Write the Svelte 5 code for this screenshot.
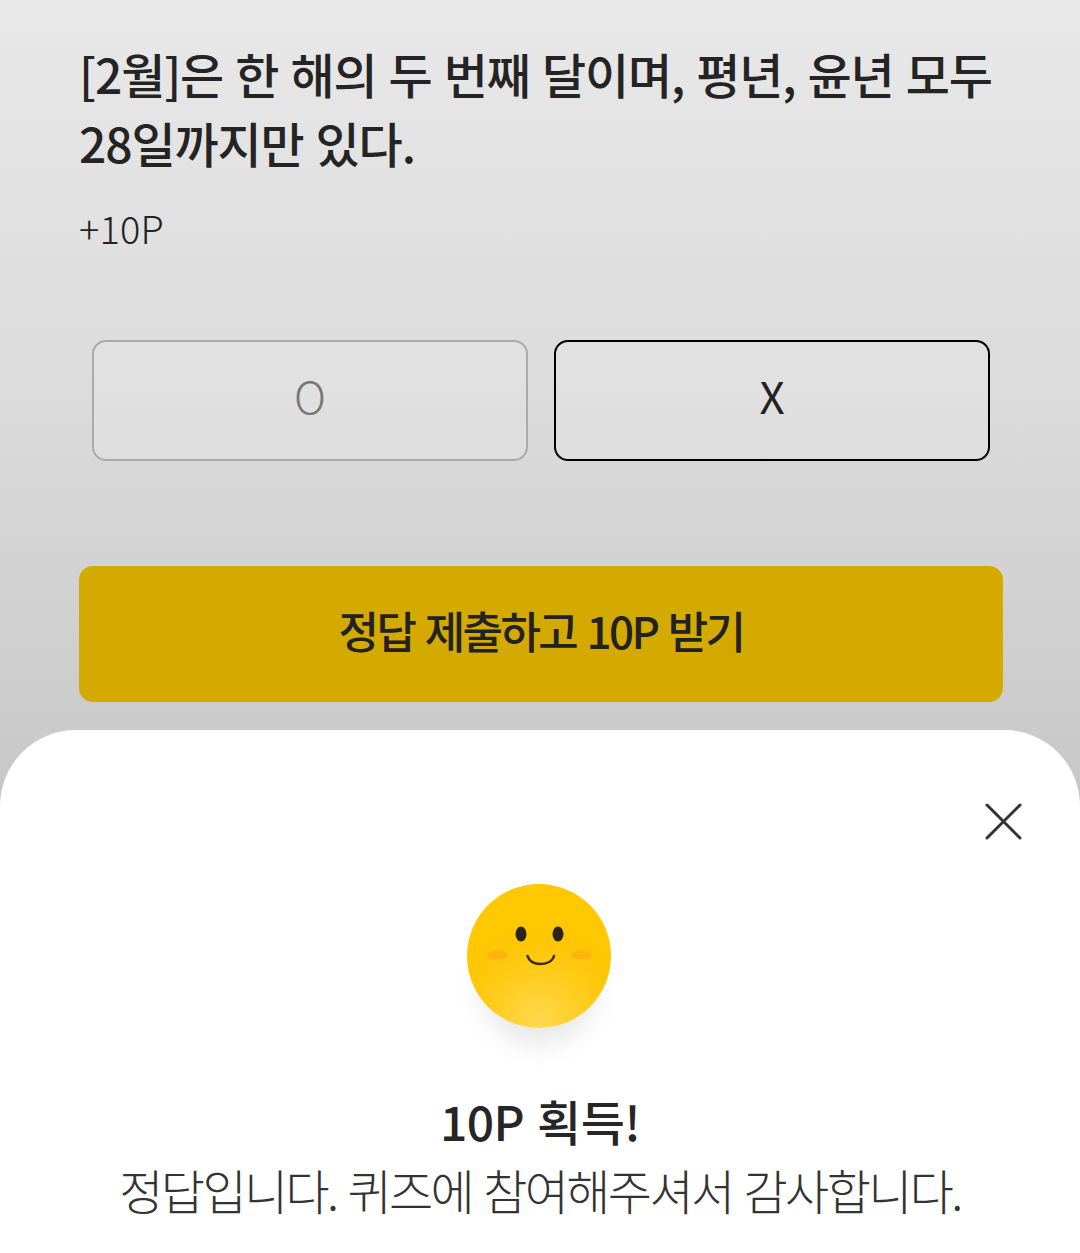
<script>
  let picked = 'X';
  const options = ['O', 'X'];
</script>

<div class="page">
  <section class="quiz">
    <h1>[2월]은 한 해의 두 번째 달이며, 평년, 윤년 모두 28일까지만 있다.</h1>
    <p class="point">+10P</p>
    <div class="options">
      {#each options as opt}
        <button class="opt" class:picked={picked === opt} on:click={() => (picked = opt)}>{opt}</button>
      {/each}
    </div>
    <button class="submit">정답 제출하고 10P 받기</button>
  </section>

  <section class="sheet">
    <button class="close" aria-label="닫기">
      <svg width="38" height="38" viewBox="0 0 38 38" fill="none" stroke="#333" stroke-width="3" stroke-linecap="round"><path d="M3 3l33 33M36 3L3 36"/></svg>
    </button>
    <div class="face">
      <svg width="144" height="144" viewBox="0 0 144 144">
        <defs>
          <radialGradient id="skin" cx="72" cy="138" r="100" gradientUnits="userSpaceOnUse">
            <stop offset="0" stop-color="#ffd84f"/>
            <stop offset="0.45" stop-color="#ffcd20"/>
            <stop offset="0.8" stop-color="#ffc606"/>
            <stop offset="1" stop-color="#ffc800"/>
          </radialGradient>
        </defs>
        <circle cx="72" cy="72" r="72" fill="url(#skin)"/>
        <ellipse cx="30.500" cy="71" rx="10.500" ry="4.500" fill="#ffb30f"/>
        <ellipse cx="114.500" cy="71" rx="10.500" ry="4.500" fill="#ffb30f"/>
        <ellipse cx="54" cy="50" rx="5.500" ry="7.500" fill="#2b2410"/>
        <ellipse cx="91" cy="50" rx="5.500" ry="7.500" fill="#2b2410"/>
        <path d="M60.500 72c2 6 8 8 13 8s12-2 13.500-8" fill="none" stroke="#3a2f10" stroke-width="2.500" stroke-linecap="round"/>
      </svg>
    </div>
    <h2>10P 획득!</h2>
    <p class="msg">정답입니다. 퀴즈에 참여해주셔서 감사합니다.</p>
  </section>
</div>

<style>
  :global(body) { margin: 0; }
  .page {
    width: 1080px; height: 1253px; overflow: hidden;
    display: flex; flex-direction: column;
    background: linear-gradient(#e8e8e8, #dbdbdb 400px, #cbcbcb 730px, #c6c6c6 800px);
    font-family: "Noto Sans CJK KR", "Noto Sans", sans-serif;
    color: #222;
  }
  .quiz { height: 730px; box-sizing: border-box; padding: 39px 77px 0 79px; flex: none; }
  h1 { margin: 0; font-size: 48px; line-height: 69px; font-weight: 500; letter-spacing: -1.15px; word-spacing: 2.5px; color: #242424; }
  .point { margin: 26px 0 0; font-size: 38px; line-height: 50px; font-weight: 300; color: #222; letter-spacing: 0.2px; }
  .options { display: flex; gap: 26px; margin: 87px 13px 0; }
  .opt {
    flex: 1; height: 121px; box-sizing: border-box; padding: 0 0 11px;
    background: rgba(255,255,255,0.14); border: 2px solid #aaa; border-radius: 14px;
    font: 300 44px "Noto Sans CJK KR", sans-serif; color: #777;
  }
  .opt.picked { border-color: #000; color: #222; font-weight: 400; }
  .submit {
    display: block; width: 924px; height: 136px; margin-top: 105px; padding: 0 0 8px;
    background: #d4aa00; border: 0; border-radius: 14px;
    font: 500 44px "Noto Sans CJK KR", sans-serif; letter-spacing: -2.6px; word-spacing: 3px; color: #222;
  }
  .sheet {
    position: relative; flex: 1;
    background: #fff; border-radius: 76px 76px 0 0;
    display: flex; flex-direction: column; align-items: center;
    padding-top: 154px;
  }
  .close { position: absolute; top: 72px; right: 58px; width: 38px; height: 38px; padding: 0; border: 0; background: none; line-height: 0; }
  .face { width: 144px; height: 144px; margin-right: 3px; border-radius: 50%; box-shadow: 0 32px 26px -14px rgba(0,0,0,0.09); }
  h2 { margin: 62px 0 0; font-size: 48px; line-height: 60px; font-weight: 500; letter-spacing: -0.6px; word-spacing: 3px; color: #262626; }
  .msg { margin: 7px 0 0; font-size: 48px; line-height: 64px; font-weight: 300; letter-spacing: -2.6px; word-spacing: 3px; color: #333; }
</style>
